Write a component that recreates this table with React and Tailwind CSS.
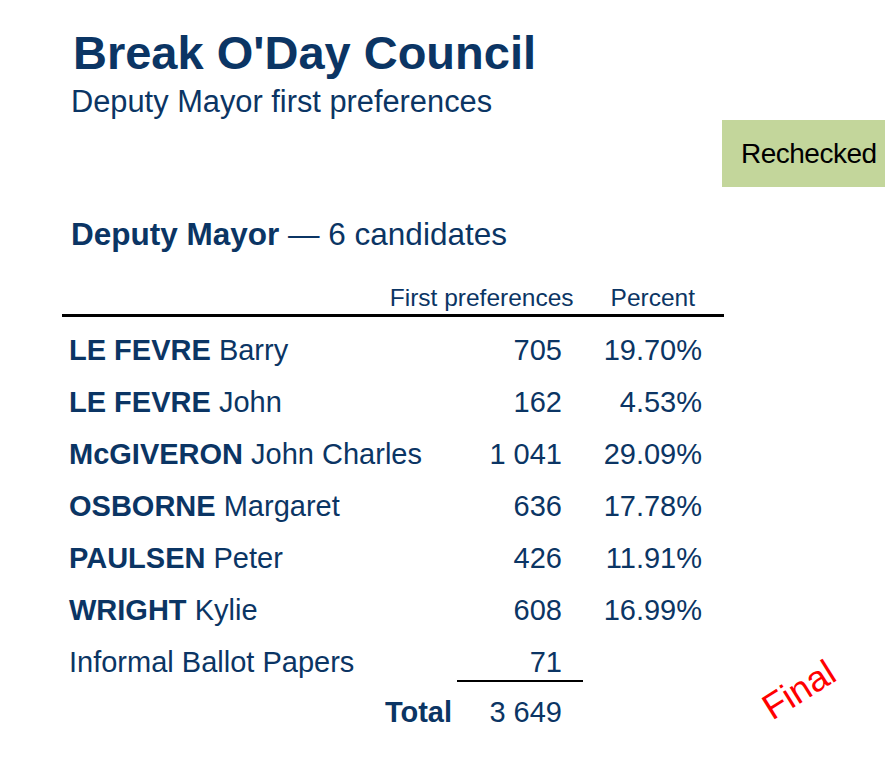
// Break O'Day Council — Deputy Mayor first preferences
const NAVY = 'text-[#0b3564]';

const rows = [
  { last: 'LE FEVRE', first: 'Barry', votes: '705', pct: '19.70%' },
  { last: 'LE FEVRE', first: 'John', votes: '162', pct: '4.53%' },
  { last: 'McGIVERON', first: 'John Charles', votes: '1 041', pct: '29.09%' },
  { last: 'OSBORNE', first: 'Margaret', votes: '636', pct: '17.78%' },
  { last: 'PAULSEN', first: 'Peter', votes: '426', pct: '11.91%' },
  { last: 'WRIGHT', first: 'Kylie', votes: '608', pct: '16.99%' },
];

export default function App() {
  return (
    <div
      className={`relative w-[885px] h-[767px] overflow-hidden bg-white ${NAVY}`}
      style={{ fontFamily: '"Liberation Sans", Arial, sans-serif' }}
    >
      {/* heading */}
      <div className="pt-[25px] pl-[71px]">
        <h1 className="ml-[2px] text-[47px] leading-[56px] font-bold">Break O'Day Council</h1>
        <p className="mt-[3px] text-[30.8px] leading-[36px]">Deputy Mayor first preferences</p>
      </div>

      <div className="flex justify-end">
        <div className="flex h-[67px] w-[163px] items-center bg-[#c3d69b] pl-[19px] text-[28px] tracking-[-0.5px] text-black">
          Rechecked
        </div>
      </div>

      <h2 className="mt-[29px] pl-[71px] text-[31.5px] leading-[36px]">
        <span className="font-bold">Deputy Mayor</span> — 6 candidates
      </h2>

      {/* results table */}
      <div className="ml-[62px] mt-[32px] w-[662px]">
        <div className="flex justify-end gap-[37px] border-b-[3px] border-black pb-[2px] pr-[29px] text-[24.5px] leading-[28px]">
          <span>First preferences</span>
          <span>Percent</span>
        </div>

        <div className="mt-[7px]">
          {rows.map((r, i) => (
            <div key={i} className="grid h-[52px] grid-cols-[400px_100px_140px] text-[29px] leading-[52px]">
              <div className="pl-[7px] whitespace-nowrap">
                <span className="font-bold">{r.last}</span> {r.first}
              </div>
              <div className="text-right">{r.votes}</div>
              <div className="text-right">{r.pct}</div>
            </div>
          ))}
          <div className="grid h-[44px] grid-cols-[400px_100px_140px] text-[29px] leading-[52px]">
            <div className="pl-[7px] whitespace-nowrap">Informal Ballot Papers</div>
            <div className="text-right">71</div>
          </div>
          <div className="ml-[395px] h-[2px] w-[126px] bg-black" />
          <div className="mt-[4px] grid h-[52px] grid-cols-[400px_100px_140px] text-[29px] leading-[52px]">
            <div className="pr-[10px] text-right font-bold">Total</div>
            <div className="text-right">3 649</div>
          </div>
        </div>
      </div>

      {/* stamp */}
      <div className="absolute left-[760px] top-[672px] -rotate-[32deg] text-[36px] leading-none text-[#ff0000]">
        Final
      </div>
    </div>
  );
}
